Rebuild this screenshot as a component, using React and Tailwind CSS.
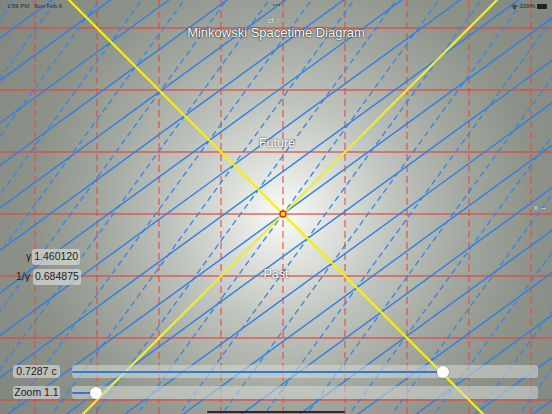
import React from "react";

const CX = 283;
const CY = 214;
const U = 62;
const V = 0.7287;
const GAMMA = 1 / Math.sqrt(1 - V * V);

function Diagram() {
  const reds = [];
  for (let k = -5; k <= 5; k++) {
    reds.push(
      <line key={"h" + k} x1={0} x2={552} y1={CY + k * U} y2={CY + k * U} stroke="#e2463f" strokeOpacity="0.8" strokeWidth="1.4" />
    );
    reds.push(
      <line key={"v" + k} x1={CX + k * U} x2={CX + k * U} y1={0} y2={414} stroke="#e2463f" strokeOpacity="0.8" strokeWidth="1.3" strokeDasharray="7 4" />
    );
  }
  const blues = [];
  const step = 1 / GAMMA;
  for (let k = -20; k <= 20; k++) {
    const c = k * step;
    const X1 = -8, X2 = 8;
    const T1 = V * X1 + c, T2 = V * X2 + c;
    blues.push(
      <line key={"s" + k} x1={CX + X1 * U} y1={CY - T1 * U} x2={CX + X2 * U} y2={CY - T2 * U} stroke="#2f7fe2" strokeWidth="1.4" />
    );
    const Ta = -8, Tb = 8;
    const Xa = V * Ta + c, Xb = V * Tb + c;
    blues.push(
      <line key={"d" + k} x1={CX + Xa * U} y1={CY - Ta * U} x2={CX + Xb * U} y2={CY - Tb * U} stroke="#3485e6" strokeWidth="1.3" strokeDasharray="6 4" />
    );
  }
  return (
    <svg className="absolute inset-0" width="552" height="414" viewBox="0 0 552 414">
      {reds}
      {blues}
      <line x1={CX - 500} y1={CY - 500} x2={CX + 500} y2={CY + 500} stroke="#f2ee1c" strokeWidth="2.2" />
      <line x1={CX - 500} y1={CY + 500} x2={CX + 500} y2={CY - 500} stroke="#f2ee1c" strokeWidth="2.2" />
      <circle cx={CX} cy={CY} r="3" fill="#ffd21a" stroke="#e3261c" strokeWidth="1.3" />
    </svg>
  );
}

function Slider({ label, pct }) {
  return (
    <div className="flex items-center gap-3 h-[13px]">
      <div className="w-[47px] h-[13px] shrink-0 rounded-[3px] bg-[rgba(205,208,203,0.75)] flex items-center justify-center text-[10.5px] leading-none text-[#1c1c1c] whitespace-nowrap">
        {label}
      </div>
      <div className="relative flex-1 h-[13px] rounded-[3px] bg-[rgba(215,218,213,0.55)]">
        <div className="absolute left-0 top-[5.5px] h-[2px] bg-[#2a7be0] rounded-full" style={{ width: pct + "%" }} />
        <div
          className="absolute top-[0.5px] w-[12px] h-[12px] -ml-[6px] rounded-full bg-white shadow-[0_0_2px_rgba(0,0,0,0.35)]"
          style={{ left: pct + "%" }}
        />
      </div>
    </div>
  );
}

export default function App() {
  return (
    <div className="relative w-[552px] h-[414px] overflow-hidden font-['Liberation_Sans',Arial,sans-serif] bg-[radial-gradient(circle_at_283px_214px,#fafcf8_0%,#e2e5e0_12%,#bfc3bd_32%,#a2a79f_52%,#8d9289_72%,#80857e_100%)]">
      <Diagram />

      {/* status bar */}
      <div className="absolute top-[2px] left-[7px] text-[6px] text-[#2a2a2a] flex gap-[5px]">
        <span>1:59 PM</span>
        <span>Sun Feb 6</span>
      </div>
      <div className="absolute top-[4px] left-[273px] flex gap-[1px]">
        <span className="w-[1.5px] h-[1.5px] rounded-full bg-[#555]" />
        <span className="w-[1.5px] h-[1.5px] rounded-full bg-[#555]" />
        <span className="w-[1.5px] h-[1.5px] rounded-full bg-[#555]" />
      </div>
      <div className="absolute top-[2px] right-[5px] flex items-center gap-[2px] text-[6px] text-[#222]">
        <svg width="7" height="6" viewBox="0 0 14 11">
          <path d="M7 10.5 L4.6 7.8 A3.6 3.6 0 0 1 9.4 7.8 Z M2.6 5.6 A6.5 6.5 0 0 1 11.4 5.6 L10.2 6.9 A4.8 4.8 0 0 0 3.8 6.9 Z M0.5 3.4 A9.5 9.5 0 0 1 13.5 3.4 L12.3 4.7 A7.8 7.8 0 0 0 1.7 4.7 Z" fill="#222" />
        </svg>
        <span>100%</span>
        <div className="w-[10px] h-[5px] rounded-[1px] bg-[#222]" />
      </div>

      {/* axis labels */}
      <div className="absolute top-[15px] left-[268px] text-[7.5px] text-[#eef0ec] [text-shadow:0_0_2px_rgba(0,0,0,0.4)]">ct ↑</div>
      <div className="absolute top-[202px] left-[534px] text-[7.5px] text-[#eef0ec] [text-shadow:0_0_2px_rgba(0,0,0,0.4)]">x →</div>

      {/* title */}
      <div className="absolute top-[23px] left-0 w-full text-center text-[13px] text-white [text-shadow:0_0_2px_rgba(0,0,0,0.85),0_0_1px_rgba(0,0,0,0.6)]">
        Minkowski Spacetime Diagram
      </div>

      <div className="absolute top-[134px] left-[1px] w-full text-center text-[12.5px] text-white [text-shadow:0_0_2px_rgba(0,0,0,0.85)]">Future</div>
      <div className="absolute top-[265px] left-0 w-full text-center text-[12.5px] text-white [text-shadow:0_0_2px_rgba(0,0,0,0.85)]">Past</div>

      {/* gamma labels */}
      <div className="absolute top-[249px] left-[26px] flex items-center gap-[1px] text-[10.5px] text-[#1c1c1c]">
        <span>γ</span>
        <span className="px-[2px] rounded-[3px] bg-[rgba(215,218,213,0.7)]">1.460120</span>
      </div>
      <div className="absolute top-[269px] left-[16px] flex items-center gap-[3px] text-[10.5px] text-[#1c1c1c]">
        <span>1/γ</span>
        <span className="px-[2px] rounded-[3px] bg-[rgba(215,218,213,0.7)]">0.684875</span>
      </div>

      {/* sliders */}
      <div className="absolute left-[13px] right-[14px] top-[365px] flex flex-col gap-[8px]">
        <Slider label="0.7287 c" pct={79.6} />
        <Slider label="Zoom 1.1" pct={5.15} />
      </div>

      {/* home indicator */}
      <div className="absolute bottom-[1px] left-[207px] w-[138px] h-[2px] rounded-full bg-[#2a2a2a]" />
    </div>
  );
}
